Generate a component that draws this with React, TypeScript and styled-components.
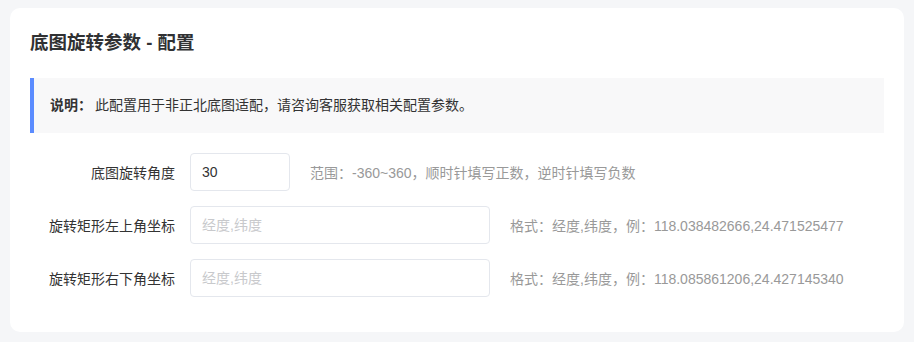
import React, {useState} from 'react';
import styled, {createGlobalStyle} from 'styled-components'

const GlobalStyle = createGlobalStyle`
    html, body {
        margin: 0;
        padding: 0;
        background-color: #f5f6f8;
        font-family: "Liberation Sans", "Noto Sans CJK SC", sans-serif;
        color: #333;
    }
`

type Field = {
    label: string
    value: string
    placeholder: string
    width: number
    hint: string
}

const fields: Field[] = [
    {label: '底图旋转角度', value: '30', placeholder: '', width: 100, hint: '范围：-360~360，顺时针填写正数，逆时针填写负数'},
    {label: '旋转矩形左上角坐标', value: '', placeholder: '经度,纬度', width: 300, hint: '格式：经度,纬度，例：118.038482666,24.471525477'},
    {label: '旋转矩形右下角坐标', value: '', placeholder: '经度,纬度', width: 300, hint: '格式：经度,纬度，例：118.085861206,24.427145340'},
]

const App: React.FC<{}> = () => {
    const [values, setValues] = useState<string[]>(fields.map(f => f.value))

    return (
        <Page>
            <GlobalStyle />
            <Card>
                <Title>底图旋转参数 - 配置</Title>
                <Notice>
                    <strong>说明：</strong>
                    <span>此配置用于非正北底图适配，请咨询客服获取相关配置参数。</span>
                </Notice>
                <Form>
                    {fields.map((field, i) => {
                        return <FormRow key={field.label}>
                            <Label>{field.label}</Label>
                            <Input
                                $width={field.width}
                                value={values[i]}
                                placeholder={field.placeholder}
                                onChange={(e) => setValues(values.map((v, j) => j === i ? e.target.value : v))}
                            />
                            <Hint>{field.hint}</Hint>
                        </FormRow>
                    })}
                </Form>
            </Card>
        </Page>
    )
}

const Page = styled.div`
    padding: 8px 10px 10px 10px;
`

const Card = styled.div`
    background-color: #fff;
    border-radius: 10px;
    padding: 24px 20px 35px 20px;
`

const Title = styled.h2`
    margin: 0 0 24px 0;
    font-size: 18.5px;
    line-height: 22px;
    font-weight: bold;
    color: #303133;
`

const Notice = styled.div`
    background-color: #f8f8f9;
    border-left: 4px solid #5b8cff;
    padding: 17px 16px;
    font-size: 14px;
    line-height: 21px;
    color: #333;

    strong {
        font-weight: bold;
        margin-right: 3px;
    }
`

const Form = styled.div`
    margin-top: 20px;
    display: flex;
    flex-direction: column;
    gap: 15px;
`

const FormRow = styled.div`
    display: flex;
    align-items: center;
`

const Label = styled.label`
    width: 145px;
    padding-right: 15px;
    text-align: right;
    font-size: 14px;
    color: #333;
`

const Input = styled.input<{$width: number}>`
    box-sizing: border-box;
    width: ${p => p.$width}px;
    height: 38px;
    padding: 0 11px;
    border: 1px solid #e4e7ed;
    border-radius: 4px;
    font-family: inherit;
    font-size: 14px;
    color: #333;
    outline: none;

    &::placeholder {
        color: #c8c9cc;
    }
`

const Hint = styled.span`
    margin-left: 20px;
    font-size: 14px;
    color: #999;
`

export default App
